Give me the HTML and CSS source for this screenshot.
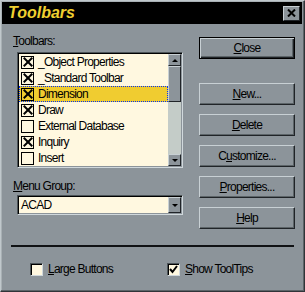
FILE: index.html
```html
<!DOCTYPE html>
<html lang="en">
<head>
  <meta charset="UTF-8" />
  <title>Toolbars</title>
  <link rel="stylesheet" href="styles.css">
</head>
<body>

  <div class="window">
    <div class="titlebar">
      <span class="title">Toolbars</span>
      <div class="title-close">
        <svg width="9" height="8" viewBox="0 0 9 8"><path d="M1 0.5 L8 7.5 M8 0.5 L1 7.5" stroke="#000" stroke-width="2"/></svg>
      </div>
    </div>

    <div class="main">
      <div class="left">
        <div class="label"><u>T</u>oolbars:</div>
        <div class="listbox">
          <ul class="items">
            <li><span class="chk on"></span><span>_Object Properties</span></li>
            <li><span class="chk on"></span><span>_Standard Toolbar</span></li>
            <li class="selected"><span class="chk on"></span><span>Dimension</span></li>
            <li><span class="chk on"></span><span>Draw</span></li>
            <li><span class="chk"></span><span>External Database</span></li>
            <li><span class="chk on"></span><span>Inquiry</span></li>
            <li><span class="chk"></span><span>Insert</span></li>
          </ul>
          <div class="vscroll">
            <div class="sb-btn"><span class="arrow-up"></span></div>
            <div class="thumb"></div>
            <div class="track"></div>
            <div class="sb-btn"><span class="arrow-down"></span></div>
          </div>
        </div>

        <div class="label menu-label"><u>M</u>enu Group:</div>
        <div class="combo">
          <span class="combo-text">ACAD</span>
          <div class="sb-btn combo-btn"><span class="arrow-down"></span></div>
        </div>
      </div>

      <div class="right">
        <button class="btn default"><u>C</u>lose</button>
        <button class="btn first"><u>N</u>ew...</button>
        <button class="btn"><u>D</u>elete</button>
        <button class="btn">C<u>u</u>stomize...</button>
        <button class="btn"><u>P</u>roperties...</button>
        <button class="btn"><u>H</u>elp</button>
      </div>
    </div>

    <div class="sep"></div>

    <div class="options">
      <label class="opt"><span class="box"></span><span><u>L</u>arge Buttons</span></label>
      <label class="opt"><span class="box">
        <svg width="9" height="9" viewBox="0 0 9 9"><path d="M1 4 L3.5 7 L8 1" stroke="#000" stroke-width="2" fill="none"/></svg>
      </span><span><u>S</u>how ToolTips</span></label>
    </div>
  </div>

</body>
</html>
```

FILE: styles.css
```css
body {
  margin: 0;
  font-family: 'Liberation Sans', Arial, sans-serif;
  font-size: 12px;
  letter-spacing: -0.75px;
  color: #000;
}

u {
  text-decoration: underline;
  text-underline-offset: 1px;
}

.window {
  width: 305px;
  height: 292px;
  box-sizing: border-box;
  background: #8c949a;
  border-top: 1px solid #c0c8cc;
  border-left: 1px solid #c0c8cc;
  border-right: 1px solid #303438;
  border-bottom: 1px solid #303438;
  box-shadow: inset -1px -1px 0 #5c6468, inset 1px 1px 0 #a8b0b4;
}

.titlebar {
  margin: 1px 2px 0 1px;
  height: 22px;
  background: #000;
  display: flex;
  align-items: center;
  justify-content: space-between;
  padding-left: 6px;
}

.title {
  color: #f0d030;
  font-weight: bold;
  font-style: italic;
  font-size: 16px;
  letter-spacing: 0;
}

.title-close {
  width: 17px;
  height: 15px;
  margin-right: 2px;
  box-sizing: border-box;
  background: #8c949a;
  border-top: 1px solid #c8d0d4;
  border-left: 1px solid #c8d0d4;
  border-right: 1px solid #202428;
  border-bottom: 1px solid #202428;
  display: flex;
  align-items: center;
  justify-content: center;
}

.main {
  display: flex;
  justify-content: space-between;
  padding: 0 9px 0 12px;
}

.left {
  width: 171px;
}

.label {
  margin-top: 10px;
  line-height: 14px;
}

.listbox {
  margin: 4px 0 0 4px;
  width: 166px;
  height: 116px;
  box-sizing: border-box;
  border-top: 1px solid #4c5458;
  border-left: 1px solid #4c5458;
  border-right: 1px solid #d0d8dc;
  border-bottom: 1px solid #d0d8dc;
  box-shadow: inset 1px 1px 0 #000, inset -1px -1px 0 #8c949a;
  padding: 1px;
  display: flex;
  background: #fff8e0;
}

.items {
  list-style: none;
  margin: 0;
  padding: 0;
  flex: 1;
}

.items li {
  height: 16px;
  box-sizing: border-box;
  display: flex;
  align-items: center;
  gap: 4px;
  padding-left: 2px;
  white-space: nowrap;
}

.items li.selected {
  background: #f0cc30;
  outline: 1px dotted #0030ff;
  outline-offset: -1px;
}

.chk {
  width: 13px;
  height: 13px;
  box-sizing: border-box;
  border: 1px solid #000;
  background: #fff8e0;
  position: relative;
}

.chk.on::before,
.chk.on::after {
  content: "";
  position: absolute;
  left: -0.5px;
  top: 4.5px;
  width: 12px;
  height: 2px;
  background: #000;
}

.chk.on::before {
  transform: rotate(45deg);
}

.chk.on::after {
  transform: rotate(-45deg);
}

.selected .chk {
  background: #f0cc30;
}

.vscroll {
  width: 13px;
  display: flex;
  flex-direction: column;
  background: #c4ccc8;
}

.sb-btn {
  height: 12px;
  box-sizing: border-box;
  background: #8c949a;
  border-top: 1px solid #c8d0d4;
  border-left: 1px solid #c8d0d4;
  border-right: 1px solid #202428;
  border-bottom: 1px solid #202428;
  display: flex;
  align-items: center;
  justify-content: center;
}

.thumb {
  height: 36px;
  box-sizing: border-box;
  background: #8c949a;
  border-top: 1px solid #c8d0d4;
  border-left: 1px solid #c8d0d4;
  border-right: 1px solid #202428;
  border-bottom: 1px solid #202428;
}

.track {
  flex: 1;
}

.arrow-up {
  width: 0;
  height: 0;
  border-left: 3px solid transparent;
  border-right: 3px solid transparent;
  border-bottom: 3px solid #000;
}

.arrow-down {
  width: 0;
  height: 0;
  border-left: 3px solid transparent;
  border-right: 3px solid transparent;
  border-top: 3px solid #000;
}

.menu-label {
  margin-top: 11px;
}

.combo {
  margin: 2px 0 0 4px;
  width: 166px;
  height: 20px;
  box-sizing: border-box;
  border-top: 1px solid #4c5458;
  border-left: 1px solid #4c5458;
  border-right: 1px solid #d0d8dc;
  border-bottom: 1px solid #d0d8dc;
  box-shadow: inset 1px 1px 0 #000, inset -1px -1px 0 #8c949a;
  padding: 1px;
  display: flex;
  align-items: stretch;
  background: #fff8e0;
}

.combo-text {
  flex: 1;
  padding-left: 2px;
  line-height: 16px;
}

.combo-btn {
  width: 13px;
  height: auto;
}

.right {
  display: flex;
  flex-direction: column;
  width: 96px;
  padding-top: 13px;
  gap: 9px;
}

.btn {
  height: 22px;
  box-sizing: border-box;
  font-family: inherit;
  font-size: 12px;
  letter-spacing: inherit;
  color: #000;
  background: #8c949a;
  border-top: 1px solid #c8d0d4;
  border-left: 1px solid #c8d0d4;
  border-right: 1px solid #202428;
  border-bottom: 1px solid #202428;
  box-shadow: inset -1px -1px 0 #5c6468;
  padding: 0;
}

.btn.default {
  border: 1px solid #000;
  box-shadow: inset 1px 1px 0 #c8d0d4, inset -1px -1px 0 #202428, inset -2px -2px 0 #5c6468;
}

.btn.first {
  margin-top: 15px;
}

.sep {
  margin: 16px 10px 0 10px;
  height: 2px;
  background: #101214;
}

.options {
  display: flex;
  padding: 15px 0 0 29px;
}

.opt {
  display: flex;
  align-items: center;
  gap: 5px;
  line-height: 14px;
  width: 138px;
}

.box {
  width: 13px;
  height: 13px;
  box-sizing: border-box;
  background: #fff8e0;
  border-top: 1px solid #4c5458;
  border-left: 1px solid #4c5458;
  border-right: 1px solid #d0d8dc;
  border-bottom: 1px solid #d0d8dc;
  box-shadow: inset 1px 1px 0 #000;
  display: flex;
  align-items: center;
  justify-content: center;
}
```
